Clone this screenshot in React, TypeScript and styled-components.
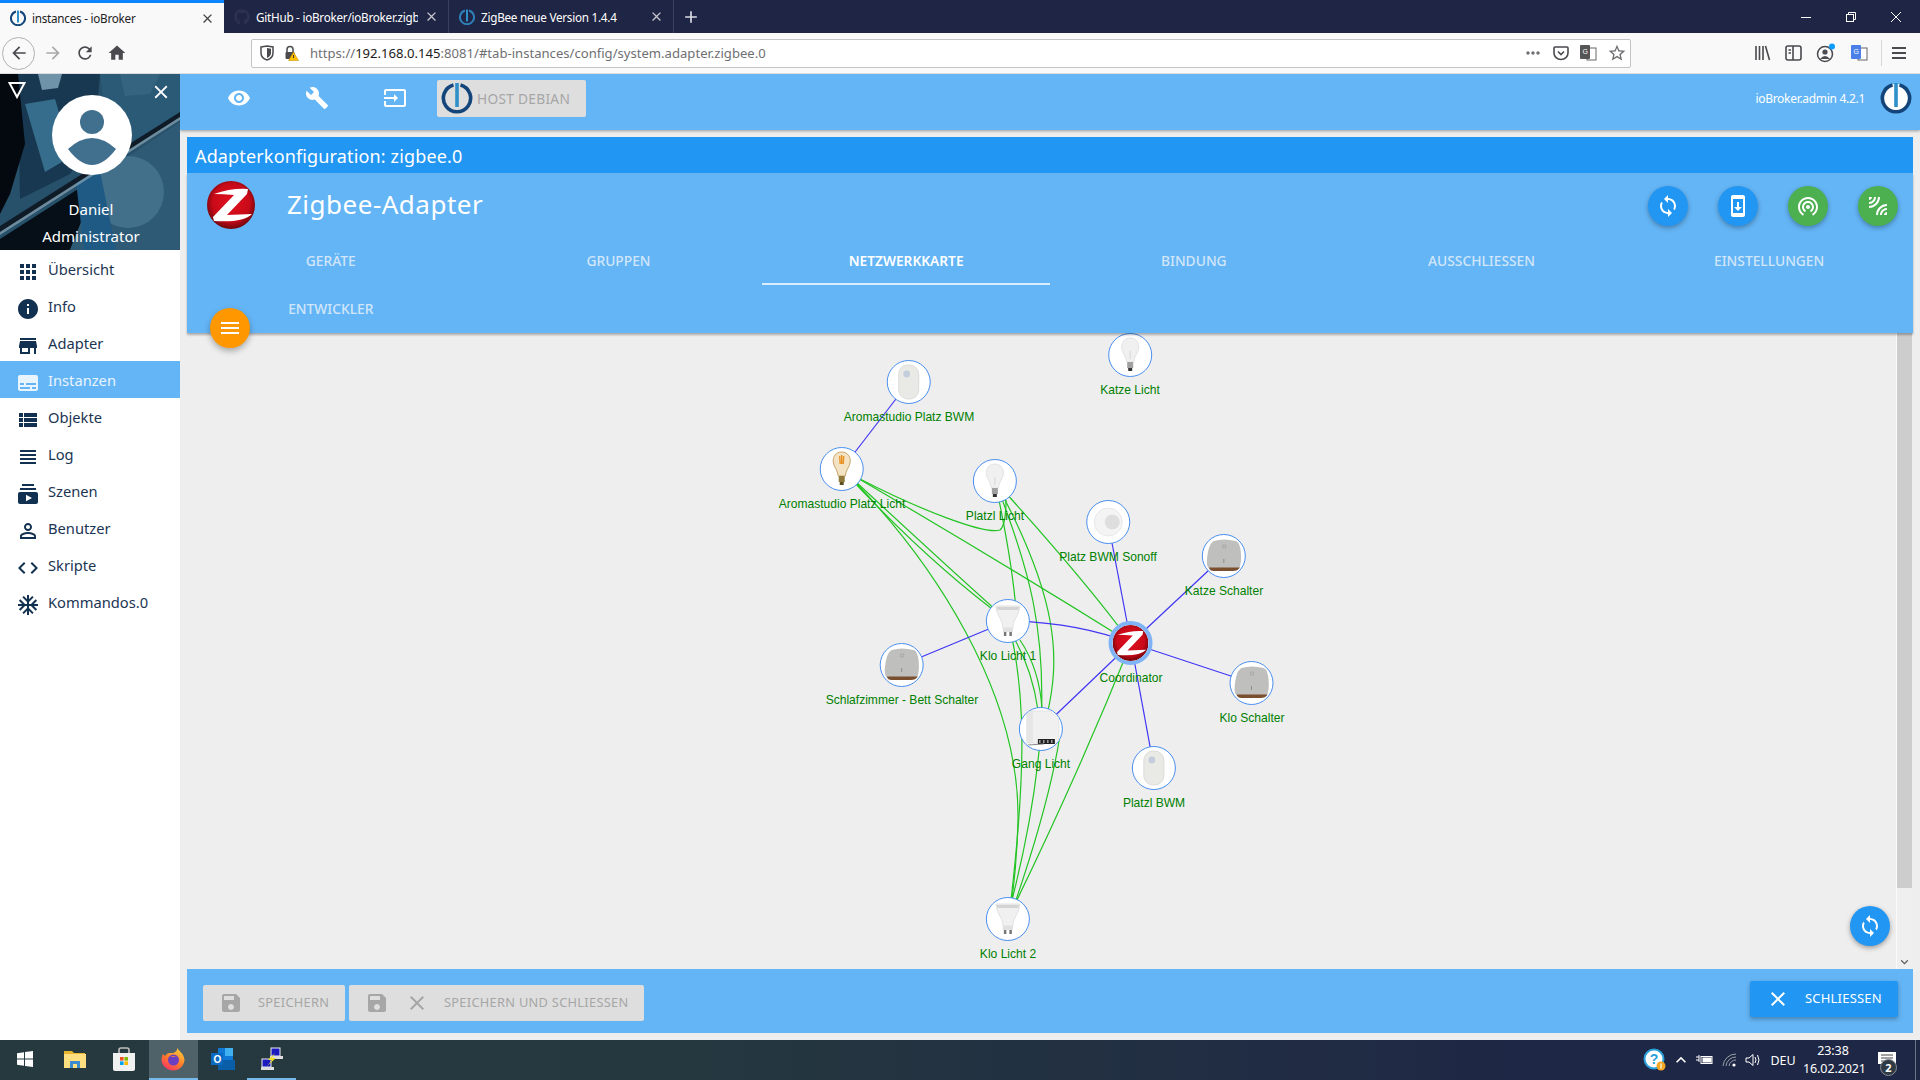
import React from "react";
import styled, { createGlobalStyle } from "styled-components";
import { FaGithub } from "react-icons/fa";
import {
  MdApps,
  MdInfo,
  MdStore,
  MdSubtitles,
  MdViewList,
  MdViewHeadline,
  MdSubscriptions,
  MdPersonOutline,
  MdCode,
  MdAcUnit,
  MdVisibility,
  MdBuild,
  MdInput,
  MdSave,
  MdClose,
  MdSync,
  MdSystemUpdate,
  MdWifiTethering,
  MdLeakAdd,
  MdMenu,
  MdArrowBack,
  MdArrowForward,
  MdRefresh,
  MdHome,
  MdAdd,
  MdKeyboardArrowDown,
  MdKeyboardArrowUp,
  MdStarBorder,
  MdMoreHoriz,
} from "react-icons/md";

const UI_FONT = `"Noto Sans", "Open Sans", sans-serif`;

const GlobalStyle = createGlobalStyle`
  html, body {
    margin: 0;
    padding: 0;
    overflow: hidden;
    background: #eeeeee;
    font-family: ${UI_FONT};
  }
  * { box-sizing: border-box; }
`;

const Screen = styled.div`
  width: 1920px;
  height: 1080px;
  display: flex;
  flex-direction: column;
  overflow: hidden;
`;

/* ---------- browser chrome ---------- */

const TabStrip = styled.div`
  height: 33px;
  background: #1f2544;
  display: flex;
  align-items: stretch;
  color: #fff;
  flex: none;
`;

const BrowserTab = styled.div<{ $active?: boolean; $width?: number }>`
  width: ${(p) => p.$width ?? 225}px;
  display: flex;
  align-items: center;
  position: relative;
  padding: 0 9px 0 10px;
  gap: 6px;
  background: ${(p) => (p.$active ? "#f9f9fa" : "transparent")};
  color: ${(p) => (p.$active ? "#222" : "#fff")};
  border-top: ${(p) => (p.$active ? "3px solid #0a84ff" : "none")};
  border-right: ${(p) => (p.$active ? "none" : "1px solid #3b4062")};
  font-size: 11.7px;
  svg.close {
    margin-left: auto;
    flex: none;
  }
`;

const TabTitle = styled.span`
  white-space: nowrap;
  overflow: hidden;
  flex: 1;
  letter-spacing: -0.25px;
`;

const NewTab = styled.div`
  width: 34px;
  display: flex;
  align-items: center;
  justify-content: center;
`;

const WindowControls = styled.div`
  margin-left: auto;
  display: flex;
  align-items: center;
  padding-right: 19px;
  gap: 35px;
`;

const Toolbar = styled.div`
  height: 41px;
  background: #f9f9fa;
  border-bottom: 1px solid #dcdcde;
  display: flex;
  align-items: center;
  flex: none;
  color: #4a4a4f;
  position: relative;
`;

const NavButtons = styled.div`
  width: 251px;
  display: flex;
  align-items: center;
  padding-left: 2px;
`;

const BackCircle = styled.div`
  width: 33px;
  height: 33px;
  border-radius: 50%;
  border: 1px solid #b1b1b3;
  display: flex;
  align-items: center;
  justify-content: center;
  margin-right: 2px;
`;

const NavIcon = styled.span<{ $dim?: boolean }>`
  width: 32px;
  display: flex;
  justify-content: center;
  color: ${(p) => (p.$dim ? "#a9a9ab" : "#4a4a4f")};
`;

const UrlBar = styled.div`
  width: 1380px;
  height: 29px;
  background: #fff;
  border: 1px solid #c4c4c6;
  border-radius: 2px;
  display: flex;
  align-items: center;
  padding: 0 3px 0 8px;
  font-size: 13.1px;
  color: #6f6f73;
`;

const UrlSecurity = styled.div`
  display: flex;
  align-items: center;
  gap: 9px;
  width: 50px;
`;

const UrlHost = styled.span`
  color: #1d1d20;
`;

const UrlActions = styled.div`
  margin-left: auto;
  display: flex;
  align-items: center;
  gap: 10px;
`;

const ToolIcons = styled.div`
  flex: 1;
  display: flex;
  align-items: center;
  padding-left: 123px;
  gap: 14px;
`;

const ToolDivider = styled.span`
  width: 1px;
  height: 26px;
  background: #d7d7db;
  margin: 0 -5px 0 -1px;
`;

/* ---------- admin page ---------- */

const Main = styled.div`
  flex: 1;
  display: flex;
  min-height: 0;
`;

const Sidebar = styled.nav`
  width: 180px;
  background: #fff;
  flex: none;
  display: flex;
  flex-direction: column;
`;

const Profile = styled.div`
  height: 176px;
  position: relative;
  background: #0b1c2c;
  overflow: hidden;
  color: #fff;
  display: flex;
  flex-direction: column;
  align-items: center;
  flex: none;
`;

const ProfileArt = styled.svg`
  position: absolute;
  inset: 0;
`;

const ProfileTool = styled.span<{ $side: "left" | "right" }>`
  position: absolute;
  top: 7px;
  ${(p) => p.$side}: 8px;
  display: flex;
`;

const Avatar = styled.svg`
  position: relative;
  margin-top: 21px;
  margin-left: 3px;
  flex: none;
`;

const ProfileName = styled.div<{ $first?: boolean }>`
  position: relative;
  font-size: 15px;
  line-height: 27px;
  margin-top: ${(p) => (p.$first ? "21px" : "0")};
  margin-left: 2px;
`;

const MenuItem = styled.div<{ $active?: boolean }>`
  height: 37px;
  display: flex;
  padding-left: 16px;
  gap: 8px;
  font-size: 14.7px;
  line-height: 38px;
  background: ${(p) => (p.$active ? "#64b5f6" : "transparent")};
  color: ${(p) => (p.$active ? "#e8f4fe" : "#1c3553")};
  svg {
    color: ${(p) => (p.$active ? "#e8f4fe" : "#12304f")};
    margin-top: 10px;
    flex: none;
  }
`;

const Content = styled.div`
  flex: 1;
  min-width: 0;
  display: flex;
  flex-direction: column;
  background: #eeeeee;
`;

const TopBar = styled.header`
  height: 56px;
  padding-bottom: 8px;
  background: #64b5f6;
  box-shadow: 0 1px 3px rgba(0, 0, 0, 0.35);
  display: flex;
  align-items: center;
  color: #fff;
  flex: none;
`;

const TopBarIcon = styled.span`
  width: 78px;
  display: flex;
  justify-content: center;
`;

const TopBarIcons = styled.div`
  display: flex;
  padding-left: 20px;
  margin-right: 4px;
`;

const HostButton = styled.div`
  width: 149px;
  height: 37px;
  margin-left: -1px;
  background: #dedede;
  border-radius: 2px;
  display: flex;
  align-items: center;
  padding-left: 4px;
  gap: 4px;
  color: #a6a6a6;
  font-size: 13.7px;
  letter-spacing: 0.3px;
`;

const TopBarVersion = styled.div`
  margin-left: auto;
  font-size: 12px;
  letter-spacing: -0.3px;
  padding-right: 15px;
`;

const TopBarLogo = styled.div`
  width: 32px;
  height: 32px;
  margin-right: 8px;
  display: flex;
`;

const Card = styled.section`
  flex: 1;
  margin: 7px 7px 7px 7px;
  min-height: 0;
  display: flex;
  flex-direction: column;
  position: relative;
`;

const CardTitle = styled.div`
  height: 36px;
  background: #2196f3;
  color: #fff;
  font-size: 18px;
  line-height: 38px;
  padding-left: 8px;
  letter-spacing: 0.15px;
  flex: none;
`;

const AdapterHead = styled.div`
  background: #64b5f6;
  height: 160px;
  box-shadow: 0 2px 2px rgba(0, 0, 0, 0.28);
  position: relative;
  z-index: 2;
  flex: none;
`;

const AdapterRow = styled.div`
  height: 64px;
  display: flex;
  align-items: center;
  padding: 0 15px 0 20px;
`;

const AdapterName = styled.h1`
  margin: 0 0 2px 32px;
  font-size: 26px;
  font-weight: 400;
  color: #fff;
  letter-spacing: 0.5px;
`;

const RoundButtons = styled.div`
  margin-left: auto;
  display: flex;
  gap: 30px;
  padding-top: 2px;
`;

const RoundButton = styled.div<{ $color: string }>`
  width: 40px;
  height: 40px;
  border-radius: 50%;
  background: ${(p) => p.$color};
  box-shadow: 0 2px 5px rgba(0, 0, 0, 0.3);
  display: flex;
  align-items: center;
  justify-content: center;
  color: #fff;
`;

const TabGrid = styled.div`
  display: grid;
  grid-template-columns: repeat(6, 1fr);
  grid-auto-rows: 48px;
`;

const ConfigTab = styled.div<{ $active?: boolean }>`
  display: flex;
  align-items: center;
  justify-content: center;
  font-size: ${(p) => (p.$active ? "13.7px" : "13.8px")};
  font-weight: ${(p) => (p.$active ? 600 : 500)};
  color: ${(p) => (p.$active ? "#fff" : "#d2e6f9")};
  border-bottom: 2px solid ${(p) => (p.$active ? "#d9edfd" : "transparent")};
`;

const MenuFab = styled.div`
  position: absolute;
  left: 23px;
  top: 135px;
  width: 40px;
  height: 40px;
  border-radius: 50%;
  background: #ff9800;
  box-shadow: 0 3px 6px rgba(0, 0, 0, 0.3);
  display: flex;
  align-items: center;
  justify-content: center;
  color: #fff;
`;

const GraphArea = styled.div`
  flex: 1;
  min-height: 0;
  display: flex;
`;

const GraphCanvas = styled.div`
  flex: 1;
  position: relative;
  background: #eeeeee;
`;

const GraphEdges = styled.svg`
  position: absolute;
  inset: 0;
`;

const GraphNode = styled.div<{ $x: number; $y: number }>`
  position: absolute;
  left: ${(p) => p.$x - 187}px;
  top: ${(p) => p.$y - 333 - 22}px;
  transform: translateX(-50%);
  display: flex;
  flex-direction: column;
  align-items: center;
  white-space: nowrap;
`;

const NodeDisc = styled.div<{ $hub?: boolean }>`
  width: 44px;
  height: 44px;
  border-radius: 50%;
  background: #fff;
  border: ${(p) => (p.$hub ? "4px solid #7eb3f5" : "1px solid #4a8ff0")};
  overflow: hidden;
  display: flex;
  align-items: center;
  justify-content: center;
`;

const NodeLabel = styled.div`
  font-family: "Liberation Sans", Arial, sans-serif;
  font-size: 12.05px;
  line-height: 14px;
  margin-top: 6px;
  color: #008000;
`;

const RefreshFab = styled.div`
  position: absolute;
  right: 6px;
  bottom: 23px;
  width: 40px;
  height: 40px;
  border-radius: 50%;
  background: #2196f3;
  box-shadow: 0 2px 5px rgba(0, 0, 0, 0.35);
  display: flex;
  align-items: center;
  justify-content: center;
  color: #fff;
  z-index: 3;
`;

const ScrollTrack = styled.div`
  width: 17px;
  background: #efefef;
  border-left: 1px solid #fafafa;
  display: flex;
  flex-direction: column;
  padding-right: 1px;
  color: #606060;
  flex: none;
`;

const ScrollThumb = styled.div`
  height: 555px;
  background: #cdcdcd;
`;

const ScrollArrow = styled.div`
  margin-top: auto;
  display: flex;
  justify-content: center;
  align-items: center;
  height: 15px;
`;

const CardFooter = styled.footer`
  height: 64px;
  background: #64b5f6;
  flex: none;
  display: flex;
  align-items: flex-start;
  padding: 16px 16px 0;
  gap: 4px;
`;

const DisabledButton = styled.div<{ $width: number }>`
  width: ${(p) => p.$width}px;
  height: 36px;
  background: #dedede;
  border-radius: 2px;
  display: flex;
  align-items: center;
  color: #a6a6a6;
  font-size: 12.8px;
  letter-spacing: 0.3px;
  padding-left: 16px;
  svg {
    flex: none;
  }
  svg + svg {
    margin-left: 16px;
  }
`;

const ButtonText = styled.span<{ $gap: number }>`
  margin-left: ${(p) => p.$gap}px;
  margin-bottom: 2px;
  white-space: nowrap;
`;

const CloseButton = styled.div`
  margin-left: auto;
  margin-top: -4px;
  margin-right: -1px;
  width: 148px;
  height: 36px;
  background: #2196f3;
  border-radius: 2px;
  box-shadow: 0 2px 4px rgba(0, 0, 0, 0.3);
  display: flex;
  align-items: center;
  padding-left: 16px;
  color: #fff;
  font-size: 13px;
  letter-spacing: 0.2px;
`;

/* ---------- taskbar ---------- */

const Taskbar = styled.div`
  height: 40px;
  flex: none;
  background: linear-gradient(90deg, #25393f 0, #25383f 35%, #1e2745 80%);
  display: flex;
  align-items: stretch;
  color: #fff;
`;

const TaskSlot = styled.div<{ $active?: boolean; $open?: boolean }>`
  width: 49.3px;
  display: flex;
  align-items: center;
  justify-content: center;
  background: ${(p) => (p.$active ? "#4f6169" : "transparent")};
  border-bottom: 2px solid ${(p) => (p.$active || p.$open ? "#76b9ed" : "transparent")};
`;

const StartSlot = styled(TaskSlot)`
  width: 50px;
`;

const Tray = styled.div`
  margin-left: auto;
  margin-right: 4px;
  display: flex;
  align-items: center;
  position: relative;
  padding-right: 4px;
  border-right: 1px solid #6d7380;
`;

const TraySlot = styled.span<{ $width: number }>`
  width: ${(p) => p.$width}px;
  display: flex;
  justify-content: center;
  align-items: center;
`;

const TrayLang = styled.span`
  width: 40px;
  text-align: center;
  font-size: 12.5px;
`;

const TrayClock = styled.div`
  width: 60px;
  text-align: center;
  font-size: 12.5px;
  line-height: 18px;
  letter-spacing: -0.1px;
  white-space: nowrap;
`;

const NoticeBadge = styled.span`
  position: absolute;
  right: 18px;
  bottom: 4px;
  width: 17px;
  height: 17px;
  border-radius: 50%;
  background: #2f3a44;
  border: 1px solid #8a8f96;
  font-size: 11px;
  font-weight: 700;
  line-height: 15px;
  text-align: center;
`;

/* ---------- drawings ---------- */

const IoBrokerLogo = ({ size, fill = "none" }: { size: number; fill?: string }) => (
  <svg width={size} height={size} viewBox="0 0 32 32">
    <circle cx="16" cy="16" r="14" fill={fill} />
    <path d="M12.5 3 A13.6 13.6 0 1 0 19.5 3" fill="none" stroke="#14457a" strokeWidth="3.6" />
    <rect x="14.2" y="1" width="3.6" height="24" fill="#2f8fc8" />
  </svg>
);

const ZigbeeLogo = ({ size, id }: { size: number; id: string }) => (
  <svg width={size} height={size} viewBox="0 0 48 48">
    <defs>
      <radialGradient id={id} cx="50%" cy="45%" r="55%">
        <stop offset="0%" stopColor="#e01020" />
        <stop offset="70%" stopColor="#c80a18" />
        <stop offset="100%" stopColor="#6e060c" />
      </radialGradient>
    </defs>
    <circle cx="24" cy="24" r="24" fill={`url(#${id})`} />
    <path d="M7 13 Q24 7 41 8 L40 13 L20 34 L45 33 Q36 42 7 40 L6 36 L27 14 Q16 13 7 13 Z" fill="#fff" />
  </svg>
);

const Bulb = ({ amber }: { amber?: boolean }) => (
  <svg width="34" height="36" viewBox="0 0 34 36">
    <path
      d="M17 1 C23 1 26 6 25.5 11 C25 16 21 19 20.5 25 L13.5 25 C13 19 9 16 8.5 11 C8 6 11 1 17 1 Z"
      fill={amber ? "#f3e2c4" : "#f0f0f0"}
      stroke={amber ? "#c9a46a" : "#e2e2e2"}
    />
    {amber && <path d="M15 5 L15.5 13 M17 4 L17 13 M19 5 L18.5 13" stroke="#e89020" strokeWidth="1.4" />}
    {!amber && <path d="M17 14 L17 22" stroke="#d5d5d5" />}
    <rect x="14" y="25" width="6" height="6" fill={amber ? "#8f7a3a" : "#a0a0a0"} />
    <rect x="15" y="31" width="4" height="3" fill={amber ? "#5d4f24" : "#333"} />
  </svg>
);

const Spot = () => (
  <svg width="36" height="36" viewBox="0 0 36 36">
    <path d="M6 3 L30 3 L29 8 C27 15 23 18 23 25 L13 25 C13 18 9 15 7 8 Z" fill="#f0f0f0" stroke="#e0e0e0" />
    <path d="M7 4 L29 4 L28.5 7 L7.5 7 Z" fill="#d4d4d4" />
    <rect x="13" y="25" width="10" height="4" fill="#e0e0e0" />
    <rect x="14" y="29" width="2.5" height="4" fill="#777" />
    <rect x="19.5" y="29" width="2.5" height="4" fill="#777" />
  </svg>
);

const Pir = () => (
  <svg width="24" height="36" viewBox="0 0 24 36">
    <rect x="2" y="1" width="20" height="34" rx="9" fill="#e9e9e6" stroke="#dcdcd8" />
    <circle cx="10" cy="10" r="3.4" fill="#c4cddb" />
  </svg>
);

const Motion = () => (
  <svg width="36" height="36" viewBox="0 0 36 36">
    <circle cx="18" cy="18" r="14" fill="#f4f4f4" stroke="#e8e8e8" />
    <circle cx="22" cy="18" r="7.5" fill="#dedede" />
  </svg>
);

const SwitchPad = () => (
  <svg width="38" height="36" viewBox="0 0 38 36">
    <path d="M9 3 Q19 0 31 3 Q35 4 36 14 Q37 26 34 31 L6 31 Q2 30 2 24 Q3 6 9 3 Z" fill="#bfc0bd" />
    <path d="M4 29.5 L35 29.5 Q33 33 28 33 L9 33 Q5 33 4 29.5 Z" fill="#7a4f30" />
    <path d="M18 7 h3 v3 h-3 Z" fill="none" stroke="#a0a09d" strokeWidth="0.7" />
    <path d="M19 21 v4" stroke="#8d8d8a" />
  </svg>
);

const RelayBox = () => (
  <svg width="38" height="38" viewBox="0 0 38 38">
    <rect x="5" y="1" width="32" height="32" fill="#f0f0f0" stroke="#e2e2e2" />
    <rect x="5" y="1" width="6" height="32" fill="#e6e6e6" />
    <rect x="16" y="29" width="17" height="5" fill="#222" />
    <path d="M18 30 v3 M22 30 v3 M26 30 v3 M30 30 v3" stroke="#ddd" />
    <path d="M6 35 L22 34" stroke="#888" />
  </svg>
);

const UserArt = () => (
  <ProfileArt width="180" height="176" viewBox="0 0 180 176">
    <rect width="180" height="176" fill="#27506a" />
    <polygon points="18,0 100,0 95,60 70,100 20,125" fill="#173850" />
    <polygon points="25,30 55,25 72,82 45,98" fill="#376d8c" />
    <polygon points="38,0 62,0 58,14 42,16" fill="#6f93a8" />
    <polygon points="120,0 160,0 150,20 125,22" fill="#55809a" />
    <polygon points="0,0 18,0 25,70 10,120 0,140" fill="#04090f" />
    <polygon points="100,0 180,0 180,40 110,80" fill="#2c5d78" opacity="0.8" />
    <polygon points="0,165 100,101 70,176 0,176" fill="#060f18" />
    <polygon points="100,101 180,48 180,176 70,176" fill="#2f5a76" />
    <circle cx="128" cy="118" r="36" fill="#5a8aa5" opacity="0.45" />
    <polygon points="76,108 100,97 116,176 84,176" fill="#1f5a85" />
    <polygon points="0,152 180,38 180,43 0,158" fill="#0f1c28" />
    <polygon points="0,158 180,43 180,46 0,161" fill="#b6c8d2" opacity="0.5" />
  </ProfileArt>
);

const HideTriangle = () => (
  <svg width="18" height="18" viewBox="0 0 18 18">
    <path d="M1.5 2 L16.5 2 L9 16 Z" fill="none" stroke="#fff" strokeWidth="2" />
  </svg>
);

const Pocket = () => (
  <svg width="16" height="16" viewBox="0 0 16 16" fill="none" stroke="#4a4a4f" strokeWidth="1.6">
    <path d="M2 2 H14 Q15 2 15 3 V8 A7 6.5 0 0 1 1 8 V3 Q1 2 2 2 Z" />
    <path d="M5 6.5 L8 9.5 L11 6.5" />
  </svg>
);

const Translate = ({ blue }: { blue?: boolean }) => (
  <svg width="18" height="18" viewBox="0 0 18 18">
    <rect x="8" y="4" width="9" height="12" fill="#fff" stroke="#666" />
    <rect x="1" y="1" width="10" height="14" rx="1" fill={blue ? "#4a80e8" : "#555"} />
    <text x="3.5" y="10" fontSize="7" fontFamily="Liberation Sans" fill="#fff">G</text>
  </svg>
);

const Library = () => (
  <svg width="17" height="16" viewBox="0 0 17 16" stroke="#4a4a4f" strokeWidth="1.6" fill="none">
    <path d="M2 1 V15 M5.5 1 V15 M9 1 V15 M11.5 1 L15.5 15" />
  </svg>
);

const SidebarIcon = () => (
  <svg width="17" height="16" viewBox="0 0 17 16" stroke="#4a4a4f" strokeWidth="1.6" fill="none">
    <rect x="1" y="1" width="15" height="14" rx="2" />
    <path d="M8 1 V15 M3.5 5 H6 M3.5 8 H6" />
  </svg>
);

const Account = () => (
  <svg width="20" height="20" viewBox="0 0 20 20">
    <circle cx="9" cy="11" r="7.5" fill="none" stroke="#4a4a4f" strokeWidth="1.5" />
    <circle cx="9" cy="9" r="2.6" fill="#4a4a4f" />
    <path d="M4 16 Q9 10 14 16 Z" fill="#4a4a4f" />
    <circle cx="16" cy="3.5" r="3" fill="#0a9dff" />
  </svg>
);

const Burger = () => (
  <svg width="16" height="14" viewBox="0 0 16 14" stroke="#4a4a4f" strokeWidth="2">
    <path d="M1 2 H15 M1 7 H15 M1 12 H15" />
  </svg>
);

const Shield = () => (
  <svg width="14" height="16" viewBox="0 0 14 16">
    <path d="M1 2 L7 1 L13 2 V8 Q13 13 7 15 Q1 13 1 8 Z" fill="none" stroke="#4a4a4f" strokeWidth="1.5" />
    <path d="M7 3 L11 3.8 V8 Q11 11 7 13 Z" fill="#4a4a4f" />
  </svg>
);

const InsecureLock = () => (
  <svg width="16" height="16" viewBox="0 0 16 16">
    <path d="M4 7 V4.5 A3 3 0 0 1 10 4.5 V7" fill="none" stroke="#4a4a4f" strokeWidth="1.5" />
    <rect x="2.5" y="7" width="9" height="7" rx="1" fill="#4a4a4f" />
    <path d="M10.5 7 L15.5 15.5 H5.5 Z" fill="#ffbf00" stroke="#b58900" strokeWidth="0.5" />
    <rect x="10" y="10" width="1" height="3" fill="#333" />
  </svg>
);

const WinMin = () => (
  <svg width="10" height="10" viewBox="0 0 10 10" stroke="#fff">
    <path d="M0 5.5 H10" />
  </svg>
);

const WinMax = () => (
  <svg width="10" height="10" viewBox="0 0 10 10" stroke="#fff" fill="none">
    <rect x="0.5" y="2.5" width="7" height="7" />
    <path d="M2.5 2.5 V0.5 H9.5 V7.5 H7.5" />
  </svg>
);

const WinClose = () => (
  <svg width="10" height="10" viewBox="0 0 10 10" stroke="#fff">
    <path d="M0 0 L10 10 M10 0 L0 10" />
  </svg>
);

const FineTabLogo = ({ light }: { light?: boolean }) => (
  <svg width="16" height="16" viewBox="0 0 32 32">
    <path d="M12 3 A14 14 0 1 0 20 3" fill="none" stroke={light ? "#2f7fb8" : "#14457a"} strokeWidth="4" />
    <rect x="14" y="1" width="4" height="24" fill="#2f8fc8" />
  </svg>
);

const WinStart = () => (
  <svg width="16" height="16" viewBox="0 0 16 16" fill="#fff">
    <path d="M0 2.2 L7 1.2 V7.6 H0 Z M8 1 L16 0 V7.6 H8 Z M0 8.6 H7 V14.8 L0 13.8 Z M8 8.6 H16 V16 L8 15 Z" />
  </svg>
);

const Folder = () => (
  <svg width="22" height="18" viewBox="0 0 22 18">
    <path d="M0 1 H8 L10 3 H21 V17 H0 Z" fill="#e8b730" />
    <rect x="0" y="4" width="22" height="14" fill="#ffdf80" />
    <path d="M6 18 V11 H16 V18 H13 V14 H9 V18 Z" fill="#3a8ccf" />
  </svg>
);

const StoreBag = () => (
  <svg width="24" height="24" viewBox="0 0 24 24">
    <path d="M7 6 V3 Q7 1 9 1 H15 Q17 1 17 3 V6" fill="none" stroke="#bfbfbf" strokeWidth="1.6" />
    <path d="M1 6 H23 V22 Q23 24 21 24 H3 Q1 24 1 22 Z" fill="#f1f1f1" />
    <rect x="8" y="10" width="3.6" height="3.6" fill="#f25022" />
    <rect x="12.4" y="10" width="3.6" height="3.6" fill="#7fba00" />
    <rect x="8" y="14.4" width="3.6" height="3.6" fill="#00a4ef" />
    <rect x="12.4" y="14.4" width="3.6" height="3.6" fill="#ffb900" />
  </svg>
);

const Firefox = () => (
  <svg width="24" height="24" viewBox="0 0 24 24">
    <defs>
      <linearGradient id="ffx" x1="0.8" y1="0" x2="0.2" y2="1">
        <stop offset="0%" stopColor="#ffd43a" />
        <stop offset="55%" stopColor="#ff7b2b" />
        <stop offset="100%" stopColor="#f5306b" />
      </linearGradient>
    </defs>
    <path d="M16 0 C17 4 23 6 23.5 13 A11.5 11 0 1 1 2 7 L4 9 C6 5 10 6 12 6 C15 5 17 3 16 0 Z" fill="url(#ffx)" />
    <circle cx="12.5" cy="13" r="5.5" fill="#6b3fbf" />
    <path d="M7 11 Q12 7 18 11 Q16 9 12 9 Q9 9 7 11 Z" fill="#ff8a2b" />
  </svg>
);

const Outlook = () => (
  <svg width="24" height="22" viewBox="0 0 24 22">
    <rect x="7" y="0" width="15" height="16" fill="#0f78d4" />
    <rect x="14" y="0" width="8" height="8" fill="#40b0f0" />
    <path d="M7 12 L24 12 V22 H7 Z" fill="#0a5ea8" />
    <rect x="0" y="5" width="12" height="12" fill="#0a6ac0" />
    <text x="2.5" y="14.5" fontSize="10" fontWeight="700" fontFamily="Liberation Sans" fill="#fff">O</text>
  </svg>
);

const Putty = () => (
  <svg width="24" height="24" viewBox="0 0 24 24">
    <rect x="11" y="1" width="9" height="8" fill="#1a1ac0" stroke="#eee" />
    <rect x="10" y="9" width="13" height="3" fill="#ddd" />
    <rect x="2" y="12" width="9" height="8" fill="#1a1ac0" stroke="#eee" />
    <rect x="1" y="20" width="13" height="3" fill="#ddd" />
    <path d="M15 6 L8 13 L12 13 L7 19 L16 11 L12 11 Z" fill="#f5e020" />
  </svg>
);

const HelpTray = () => (
  <svg width="24" height="24" viewBox="0 0 24 24">
    <circle cx="11" cy="11" r="9.5" fill="#fff" stroke="#2a9fd8" strokeWidth="2" />
    <text x="6.8" y="16" fontSize="14" fontWeight="700" fontFamily="Liberation Sans" fill="#2a9fd8">?</text>
    <circle cx="18" cy="18" r="4.5" fill="#f5a623" />
    <rect x="17.4" y="15.5" width="1.2" height="5" fill="#fff" />
  </svg>
);

const TrayPower = () => (
  <svg width="18" height="12" viewBox="0 0 18 12" fill="none" stroke="#fff">
    <rect x="5" y="2.5" width="11" height="7" />
    <rect x="7" y="4" width="8" height="4" fill="#fff" />
    <path d="M0 3 H3 M0 6 H3 M3 1 V8" />
  </svg>
);

const TrayWifi = () => (
  <svg width="16" height="14" viewBox="0 0 16 14" fill="none" stroke="#9aa0a8">
    <path d="M1 13 A13 13 0 0 1 14 1 M4 13 A10 10 0 0 1 14 4 M7 13 A7 7 0 0 1 14 7" />
    <circle cx="12" cy="12" r="1.6" fill="#fff" stroke="none" />
  </svg>
);

const TrayVolume = () => (
  <svg width="16" height="14" viewBox="0 0 16 14" fill="none" stroke="#fff">
    <path d="M1 5 H4 L8 1.5 V12.5 L4 9 H1 Z" />
    <path d="M10 4 Q12 7 10 10 M12.5 2 Q15.5 7 12.5 12" />
  </svg>
);

const TrayNotice = () => (
  <svg width="18" height="16" viewBox="0 0 18 16">
    <path d="M0 0 H18 V12 H10 L6 16 V12 H0 Z" fill="#fff" />
    <path d="M3 3 H15 M3 6 H15 M3 9 H11" stroke="#444" />
  </svg>
);

/* ---------- data ---------- */

const menu = [
  { label: "Übersicht", icon: MdApps },
  { label: "Info", icon: MdInfo },
  { label: "Adapter", icon: MdStore },
  { label: "Instanzen", icon: MdSubtitles, active: true },
  { label: "Objekte", icon: MdViewList },
  { label: "Log", icon: MdViewHeadline },
  { label: "Szenen", icon: MdSubscriptions },
  { label: "Benutzer", icon: MdPersonOutline },
  { label: "Skripte", icon: MdCode },
  { label: "Kommandos.0", icon: MdAcUnit },
];

const configTabs = ["GERÄTE", "GRUPPEN", "NETZWERKKARTE", "BINDUNG", "AUSSCHLIESSEN", "EINSTELLUNGEN", "ENTWICKLER"];

const nodes = [
  { label: "Katze Licht", x: 1130, y: 355, art: <Bulb /> },
  { label: "Aromastudio Platz BWM", x: 909, y: 382, art: <Pir /> },
  { label: "Aromastudio Platz Licht", x: 842, y: 469, art: <Bulb amber /> },
  { label: "Platzl Licht", x: 995, y: 481, art: <Bulb /> },
  { label: "Platz BWM Sonoff", x: 1108, y: 522, art: <Motion /> },
  { label: "Katze Schalter", x: 1224, y: 556, art: <SwitchPad /> },
  { label: "Klo Licht 1", x: 1008, y: 621, art: <Spot /> },
  { label: "Coordinator", x: 1131, y: 643, hub: true, art: <ZigbeeLogo size={36} id="zb-node" /> },
  { label: "Schlafzimmer - Bett Schalter", x: 902, y: 665, art: <SwitchPad /> },
  { label: "Klo Schalter", x: 1252, y: 683, art: <SwitchPad /> },
  { label: "Gang Licht", x: 1041, y: 729, art: <RelayBox /> },
  { label: "Platzl BWM", x: 1154, y: 768, art: <Pir /> },
  { label: "Klo Licht 2", x: 1008, y: 919, art: <Spot /> },
];

const blueEdges = [
  "M909 382 L842 469",
  "M1108 522 L1131 643",
  "M1224 556 L1131 643",
  "M1252 683 L1131 643",
  "M1154 768 L1131 643",
  "M1041 729 L1131 643",
  "M902 665 L1008 621",
  "M1008 621 Q1075 622 1131 643",
];

const greenEdges = [
  "M842 469 Q990 555 1131 643",
  "M858 478 C920 510 985 535 1000 530 Q1006 525 1006 500",
  "M842 469 Q940 560 1008 621",
  "M842 469 Q925 560 1008 621",
  "M855 482 C930 560 1020 690 1018 820 Q1017 860 1012 900",
  "M995 481 Q1085 580 1131 643",
  "M995 481 Q1012 560 1016 610",
  "M995 481 C1030 570 1046 630 1041 729",
  "M995 481 C1060 600 1060 660 1047 715",
  "M1008 621 C1026 690 1026 770 1011 900",
  "M1015 640 Q1032 670 1038 710",
  "M1020 640 Q1040 670 1042 710",
  "M1041 729 Q1035 810 1012 900",
  "M1060 735 Q1050 800 1016 900",
  "M1131 643 Q1080 770 1016 902",
];

export default function App() {
  return (
    <Screen>
      <GlobalStyle />
      <TabStrip>
        <BrowserTab $active $width={224}>
          <FineTabLogo />
          <TabTitle>instances - ioBroker</TabTitle>
          <MdClose className="close" size={15} color="#444" />
        </BrowserTab>
        <BrowserTab>
          <FaGithub size={16} color="#2d3150" />
          <TabTitle>GitHub - ioBroker/ioBroker.zigb</TabTitle>
          <MdClose className="close" size={15} color="#c8c8d0" />
        </BrowserTab>
        <BrowserTab>
          <FineTabLogo light />
          <TabTitle>ZigBee neue Version 1.4.4</TabTitle>
          <MdClose className="close" size={15} color="#c8c8d0" />
        </BrowserTab>
        <NewTab>
          <MdAdd size={20} color="#dcdce4" />
        </NewTab>
        <WindowControls>
          <WinMin />
          <WinMax />
          <WinClose />
        </WindowControls>
      </TabStrip>

      <Toolbar>
        <NavButtons>
          <BackCircle>
            <MdArrowBack size={20} />
          </BackCircle>
          <NavIcon $dim>
            <MdArrowForward size={20} />
          </NavIcon>
          <NavIcon>
            <MdRefresh size={20} />
          </NavIcon>
          <NavIcon>
            <MdHome size={20} />
          </NavIcon>
        </NavButtons>
        <UrlBar>
          <UrlSecurity>
            <Shield />
            <InsecureLock />
          </UrlSecurity>
          <span>
            https://<UrlHost>192.168.0.145</UrlHost>:8081/#tab-instances/config/system.adapter.zigbee.0
          </span>
          <UrlActions>
            <MdMoreHoriz size={20} />
            <Pocket />
            <Translate />
            <MdStarBorder size={20} />
          </UrlActions>
        </UrlBar>
        <ToolIcons>
          <Library />
          <SidebarIcon />
          <Account />
          <Translate blue />
          <ToolDivider />
          <Burger />
        </ToolIcons>
      </Toolbar>

      <Main>
        <Sidebar>
          <Profile>
            <UserArt />
            <ProfileTool $side="left">
              <HideTriangle />
            </ProfileTool>
            <ProfileTool $side="right">
              <MdClose size={22} color="#fff" />
            </ProfileTool>
            <Avatar width="80" height="80" viewBox="0 0 80 80">
              <circle cx="40" cy="40" r="40" fill="#fff" />
              <circle cx="40" cy="27" r="12" fill="#41708f" />
              <path d="M16 54 Q28 43 40 43 Q52 43 64 54 Q52 70 40 70 Q28 70 16 54 Z" fill="#41708f" />
            </Avatar>
            <ProfileName $first>Daniel</ProfileName>
            <ProfileName>Administrator</ProfileName>
          </Profile>
          {menu.map((item) => (
            <MenuItem key={item.label} $active={item.active}>
              <item.icon size={24} />
              {item.label}
            </MenuItem>
          ))}
        </Sidebar>

        <Content>
          <TopBar>
            <TopBarIcons>
              <TopBarIcon>
                <MdVisibility size={24} />
              </TopBarIcon>
              <TopBarIcon>
                <MdBuild size={24} />
              </TopBarIcon>
              <TopBarIcon>
                <MdInput size={24} />
              </TopBarIcon>
            </TopBarIcons>
            <HostButton>
              <IoBrokerLogo size={32} />
              HOST DEBIAN
            </HostButton>
            <TopBarVersion>ioBroker.admin 4.2.1</TopBarVersion>
            <TopBarLogo>
              <IoBrokerLogo size={32} fill="#fff" />
            </TopBarLogo>
          </TopBar>

          <Card>
            <CardTitle>Adapterkonfiguration: zigbee.0</CardTitle>
            <AdapterHead>
              <AdapterRow>
                <ZigbeeLogo size={48} id="zb-head" />
                <AdapterName>Zigbee-Adapter</AdapterName>
                <RoundButtons>
                  <RoundButton $color="#2196f3">
                    <MdSync size={24} />
                  </RoundButton>
                  <RoundButton $color="#2196f3">
                    <MdSystemUpdate size={24} />
                  </RoundButton>
                  <RoundButton $color="#4caf50">
                    <MdWifiTethering size={24} />
                  </RoundButton>
                  <RoundButton $color="#4caf50">
                    <MdLeakAdd size={24} />
                  </RoundButton>
                </RoundButtons>
              </AdapterRow>
              <TabGrid>
                {configTabs.map((tab) => (
                  <ConfigTab key={tab} $active={tab === "NETZWERKKARTE"}>
                    {tab}
                  </ConfigTab>
                ))}
              </TabGrid>
              <MenuFab>
                <MdMenu size={24} />
              </MenuFab>
            </AdapterHead>

            <GraphArea>
              <GraphCanvas>
                <GraphEdges width="1709" height="636" viewBox="187 333 1709 636">
                  {greenEdges.map((d) => (
                    <path key={d} d={d} fill="none" stroke="#22c422" strokeWidth="1.2" />
                  ))}
                  {blueEdges.map((d) => (
                    <path key={d} d={d} fill="none" stroke="#4036f5" strokeWidth="1.2" />
                  ))}
                </GraphEdges>
                {nodes.map((node) => (
                  <GraphNode key={node.label} $x={node.x} $y={node.y}>
                    <NodeDisc $hub={node.hub}>{node.art}</NodeDisc>
                    <NodeLabel>{node.label}</NodeLabel>
                  </GraphNode>
                ))}
                <RefreshFab>
                  <MdSync size={24} />
                </RefreshFab>
              </GraphCanvas>
              <ScrollTrack>
                <ScrollThumb />
                <ScrollArrow>
                  <MdKeyboardArrowDown size={16} />
                </ScrollArrow>
              </ScrollTrack>
            </GraphArea>

            <CardFooter>
              <DisabledButton $width={142}>
                <MdSave size={24} />
                <ButtonText $gap={15}>SPEICHERN</ButtonText>
              </DisabledButton>
              <DisabledButton $width={295}>
                <MdSave size={24} />
                <MdClose size={24} />
                <ButtonText $gap={15}>SPEICHERN UND SCHLIESSEN</ButtonText>
              </DisabledButton>
              <CloseButton>
                <MdClose size={24} />
                <ButtonText $gap={15}>SCHLIESSEN</ButtonText>
              </CloseButton>
            </CardFooter>
          </Card>
        </Content>
      </Main>

      <Taskbar>
        <StartSlot>
          <WinStart />
        </StartSlot>
        <TaskSlot>
          <Folder />
        </TaskSlot>
        <TaskSlot>
          <StoreBag />
        </TaskSlot>
        <TaskSlot $active>
          <Firefox />
        </TaskSlot>
        <TaskSlot>
          <Outlook />
        </TaskSlot>
        <TaskSlot $open>
          <Putty />
        </TaskSlot>
        <Tray>
          <TraySlot $width={28}>
            <HelpTray />
          </TraySlot>
          <TraySlot $width={24}>
            <MdKeyboardArrowUp size={20} />
          </TraySlot>
          <TraySlot $width={24}>
            <TrayPower />
          </TraySlot>
          <TraySlot $width={26}>
            <TrayWifi />
          </TraySlot>
          <TraySlot $width={20}>
            <TrayVolume />
          </TraySlot>
          <TrayLang>DEU</TrayLang>
          <TrayClock>
            <div>23:38</div>
            <div>16.02.2021</div>
          </TrayClock>
          <TraySlot $width={48}>
            <TrayNotice />
          </TraySlot>
          <NoticeBadge>2</NoticeBadge>
        </Tray>
      </Taskbar>
    </Screen>
  );
}
